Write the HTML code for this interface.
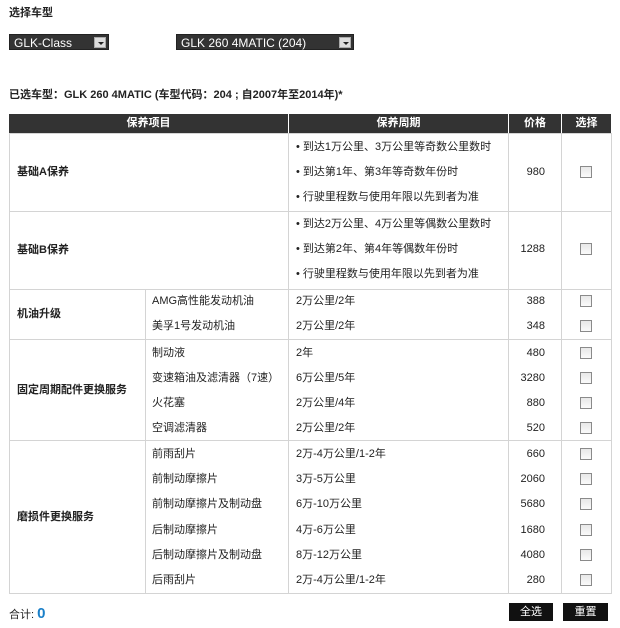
<!DOCTYPE html>
<html><head><meta charset="utf-8"><style>
*{margin:0;padding:0;box-sizing:border-box}
body{width:620px;height:628px;background:#fff;position:relative;overflow:hidden;font-family:"Liberation Sans","Noto Sans CJK SC",sans-serif;font-size:11px;color:#222}
.a{position:absolute;white-space:nowrap;line-height:14px}
.b{font-weight:bold}
.hl{position:absolute;height:1px;background:#d4d4d4}
.vl{position:absolute;width:1px;background:#d4d4d4}
.cb{position:absolute;width:12px;height:12px;border:1px solid #8a8a8a;background:linear-gradient(#e8e8e8,#fafafa);left:580px}
.sel{position:absolute;height:16px;background:#333;color:#fff;font-size:12px;line-height:16px;padding-left:4px;border:1px solid #222}
.sel i{position:absolute;right:2px;top:2px;width:12px;height:11px;background:#ddd;border:1px solid #aaa}
.sel i:after{content:"";position:absolute;left:3px;top:4px;border:3px solid transparent;border-top:3px solid #222}
.th{position:absolute;top:114px;height:19px;background:#333;color:#fff;font-weight:bold;text-align:center;line-height:19px;font-size:11px}
.p{text-align:right;width:40px}
.btn{position:absolute;top:603px;height:18px;background:#111;color:#fff;text-align:center;line-height:18px;font-size:11px}
</style></head><body>
<div class="a b" style="left:9px;top:6px">选择车型</div>
<div class="sel" style="left:9px;top:34px;width:100px">GLK-Class<i></i></div>
<div class="sel" style="left:176px;top:34px;width:178px">GLK 260 4MATIC (204)<i></i></div>
<div class="a b" style="left:9px;top:88px">已选车型：GLK 260 4MATIC (车型代码：204 ; 自2007年至2014年)*</div>

<div class="th" style="left:9px;width:279px">保养项目</div>
<div class="th" style="left:289px;width:219px">保养周期</div>
<div class="th" style="left:509px;width:52px">价格</div>
<div class="th" style="left:562px;width:49px">选择</div>

<div class="hl" style="left:9px;width:603px;top:133px"></div>
<div class="hl" style="left:9px;width:603px;top:211px"></div>
<div class="hl" style="left:9px;width:603px;top:289px"></div>
<div class="hl" style="left:9px;width:603px;top:339px"></div>
<div class="hl" style="left:9px;width:603px;top:440px"></div>
<div class="hl" style="left:9px;width:603px;top:593px"></div>
<div class="vl" style="left:9px;top:133px;height:461px"></div>
<div class="vl" style="left:145px;top:289px;height:305px"></div>
<div class="vl" style="left:288px;top:133px;height:461px"></div>
<div class="vl" style="left:508px;top:133px;height:461px"></div>
<div class="vl" style="left:561px;top:133px;height:461px"></div>
<div class="vl" style="left:611px;top:133px;height:461px"></div>

<div class="a b" style="left:17px;top:165px">基础A保养</div>
<div class="a" style="left:296px;top:140px">• 到达1万公里、3万公里等奇数公里数时</div>
<div class="a" style="left:296px;top:165px">• 到达第1年、第3年等奇数年份时</div>
<div class="a" style="left:296px;top:190px">• 行驶里程数与使用年限以先到者为准</div>
<div class="a p" style="left:505px;top:165px">980</div>
<div class="cb" style="top:166px"></div>

<div class="a b" style="left:17px;top:243px">基础B保养</div>
<div class="a" style="left:296px;top:217px">• 到达2万公里、4万公里等偶数公里数时</div>
<div class="a" style="left:296px;top:242px">• 到达第2年、第4年等偶数年份时</div>
<div class="a" style="left:296px;top:267px">• 行驶里程数与使用年限以先到者为准</div>
<div class="a p" style="left:505px;top:242px">1288</div>
<div class="cb" style="top:243px"></div>

<div class="a b" style="left:17px;top:307px">机油升级</div>
<div class="a" style="left:152px;top:294px">AMG高性能发动机油</div><div class="a" style="left:296px;top:294px">2万公里/2年</div><div class="a p" style="left:505px;top:294px">388</div><div class="cb" style="top:295px"></div>
<div class="a" style="left:152px;top:319px">美孚1号发动机油</div><div class="a" style="left:296px;top:319px">2万公里/2年</div><div class="a p" style="left:505px;top:319px">348</div><div class="cb" style="top:320px"></div>

<div class="a b" style="left:17px;top:383px">固定周期配件更换服务</div>
<div class="a" style="left:152px;top:346px">制动液</div><div class="a" style="left:296px;top:346px">2年</div><div class="a p" style="left:505px;top:346px">480</div><div class="cb" style="top:347px"></div>
<div class="a" style="left:152px;top:371px">变速箱油及滤清器（7速）</div><div class="a" style="left:296px;top:371px">6万公里/5年</div><div class="a p" style="left:505px;top:371px">3280</div><div class="cb" style="top:372px"></div>
<div class="a" style="left:152px;top:396px">火花塞</div><div class="a" style="left:296px;top:396px">2万公里/4年</div><div class="a p" style="left:505px;top:396px">880</div><div class="cb" style="top:397px"></div>
<div class="a" style="left:152px;top:421px">空调滤清器</div><div class="a" style="left:296px;top:421px">2万公里/2年</div><div class="a p" style="left:505px;top:421px">520</div><div class="cb" style="top:422px"></div>

<div class="a b" style="left:17px;top:510px">磨损件更换服务</div>
<div class="a" style="left:152px;top:447px">前雨刮片</div><div class="a" style="left:296px;top:447px">2万-4万公里/1-2年</div><div class="a p" style="left:505px;top:447px">660</div><div class="cb" style="top:448px"></div>
<div class="a" style="left:152px;top:472px">前制动摩擦片</div><div class="a" style="left:296px;top:472px">3万-5万公里</div><div class="a p" style="left:505px;top:472px">2060</div><div class="cb" style="top:473px"></div>
<div class="a" style="left:152px;top:497px">前制动摩擦片及制动盘</div><div class="a" style="left:296px;top:497px">6万-10万公里</div><div class="a p" style="left:505px;top:497px">5680</div><div class="cb" style="top:498px"></div>
<div class="a" style="left:152px;top:523px">后制动摩擦片</div><div class="a" style="left:296px;top:523px">4万-6万公里</div><div class="a p" style="left:505px;top:523px">1680</div><div class="cb" style="top:524px"></div>
<div class="a" style="left:152px;top:548px">后制动摩擦片及制动盘</div><div class="a" style="left:296px;top:548px">8万-12万公里</div><div class="a p" style="left:505px;top:548px">4080</div><div class="cb" style="top:549px"></div>
<div class="a" style="left:152px;top:573px">后雨刮片</div><div class="a" style="left:296px;top:573px">2万-4万公里/1-2年</div><div class="a p" style="left:505px;top:573px">280</div><div class="cb" style="top:574px"></div>

<div class="a" style="left:9px;top:607px">合计: <span style="color:#1a7fc8;font-size:15px;font-weight:bold">0</span></div>
<div class="btn" style="left:509px;width:44px">全选</div>
<div class="btn" style="left:563px;width:45px">重置</div>
</body></html>
